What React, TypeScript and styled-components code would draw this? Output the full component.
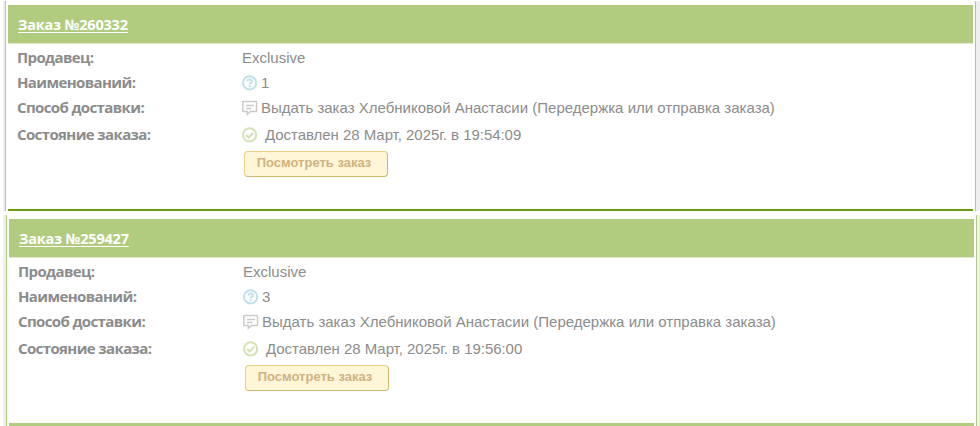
import { FC, ReactNode } from 'react';
import styled, { createGlobalStyle } from 'styled-components';

const green = '#b1cc7f';
const gray = '#efefef';

const GlobalStyle = createGlobalStyle`
    body {
        margin: 0;
        background: #fff;
        font-family: 'Liberation Sans', Arial, sans-serif;
        overflow: hidden;
    }
`;

const Page = styled.main`
    width: 980px;
    height: 426px;
    box-sizing: border-box;
    padding: 1px 0 0 3px;
    display: flex;
    flex-direction: column;
    gap: 4px;
    overflow: hidden;
`;

const StyledOrder = styled.article<{ $inner: number; $height: number }>`
    flex: none;
    height: ${({ $height }) => $height}px;
    box-sizing: border-box;
    display: flex;
    background: ${gray};
    padding-left: ${({ $inner }) => $inner}px;
`;

const Panel = styled.div`
    width: 965px;
    height: 100%;
    box-sizing: content-box;
    display: flex;
    flex-direction: column;
    background: #fff;
    border: solid ${green};
    border-width: 0 1px;
    padding: 0 2px;
`;

const Header = styled.header`
    height: 36px;
    margin-top: 4px;
    padding: 2px 10px 0;
    display: flex;
    align-items: center;
    background: ${green};
    border-bottom: 1px solid #dfe9cb;
`;

const OrderLink = styled.a`
    color: #fff;
    font: 700 14.5px/20px 'Open Sans', 'Noto Sans', sans-serif;
    letter-spacing: -0.2px;
    text-decoration: underline;
    text-underline-offset: 2px;
    text-decoration-thickness: 1px;
`;

const Details = styled.dl`
    margin: 1px 0 0;
    padding-left: 9px;
`;

const Row = styled.div<{ $height?: number }>`
    height: ${({ $height }) => $height ?? 25}px;
    display: grid;
    grid-template-columns: 225px 1fr;
    align-items: center;
`;

const Label = styled.dt`
    padding-bottom: 2px;
    color: #8c8c8c;
    font: 700 15px/20px 'Open Sans', 'Noto Sans', sans-serif;
    letter-spacing: -0.62px;
    white-space: nowrap;
`;

const Value = styled.dd<{ $gap?: number }>`
    margin: 0;
    display: flex;
    align-items: center;
    gap: ${({ $gap }) => $gap ?? 3}px;
    color: #8c8c8c;
    font-size: 15px;
    line-height: 20px;
    white-space: nowrap;
    svg {
        flex: none;
        display: block;
    }
`;

const Status = styled.span`
    letter-spacing: -0.04px;
`;

const ViewButton = styled.button`
    width: 144px;
    height: 26px;
    margin: 2px 0 0 236px;
    padding: 0 4px 3px 0;
    border: 1px solid;
    border-color: #ead184 #cbb86f #cbb86f #ead184;
    border-radius: 4px;
    background: #fff6d8;
    color: #d1b281;
    font: 700 13px/18px 'Liberation Sans', Arial, sans-serif;
`;

const BottomLine = styled.div<{ $color: string; $size: number }>`
    height: ${({ $size }) => $size}px;
    margin-top: auto;
    background: ${({ $color }) => $color};
`;

const QuestionIcon = () => (
    <svg width="16" height="16" viewBox="0 0 16 16" fill="none" stroke="#c0e2e9">
        <circle cx="7.6" cy="7.9" r="6.6" strokeWidth="2" />
        <path d="M5.4 6.4C5.4 3.8 9.9 3.8 9.9 6.2C9.9 7.8 7.7 7.8 7.7 9.3" strokeWidth="2.1" />
        <path d="M7.7 10.2v2" strokeWidth="2.1" />
    </svg>
);

const CommentIcon = () => (
    <svg width="16" height="16" viewBox="0 0 16 16" fill="none" stroke="#cbcbcb">
        <path
            d="M1.4 1.5h12.5q.6 0 .6.6v8.8q0 .6-.6.6H8.5L5.3 14.3V11.5H1.4q-.6 0-.6-.6V2.1q0-.6.6-.6z"
            strokeWidth="1.5"
        />
        <path d="M4 5.5h8M4 8.5h5.5" strokeWidth="1.3" />
    </svg>
);

const CheckIcon = () => (
    <svg width="16" height="16" viewBox="0 0 16 16" fill="none" stroke="#d5e2b6">
        <circle cx="7.6" cy="7.9" r="6.6" strokeWidth="2" />
        <path d="M4.1 7.9l2.5 2.6 4.5-4.8" strokeWidth="2.2" />
    </svg>
);

interface IField {
    label: string;
    height?: number;
    gap?: number;
    children: ReactNode;
}

const Field: FC<IField> = ({ label, height, gap, children }) => (
    <Row $height={height}>
        <Label>{label}</Label>
        <Value $gap={gap}>{children}</Value>
    </Row>
);

interface IOrder {
    id: number;
    seller: string;
    count: number;
    delivery: string;
    status: string;
    inner: number;
    height: number;
    lineSize: number;
    lineColor: string;
}

const orders: IOrder[] = [
    {
        id: 260332,
        seller: 'Exclusive',
        count: 1,
        delivery: 'Выдать заказ Хлебниковой Анастасии (Передержка или отправка заказа)',
        status: 'Доставлен 28 Март, 2025г. в 19:54:09',
        inner: 2,
        height: 210,
        lineSize: 2,
        lineColor: '#679b0b',
    },
    {
        id: 259427,
        seller: 'Exclusive',
        count: 3,
        delivery: 'Выдать заказ Хлебниковой Анастасии (Передержка или отправка заказа)',
        status: 'Доставлен 28 Март, 2025г. в 19:56:00',
        inner: 3,
        height: 211,
        lineSize: 3,
        lineColor: green,
    },
];

const Order: FC<IOrder> = ({
    id,
    seller,
    count,
    delivery,
    status,
    inner,
    height,
    lineSize,
    lineColor,
}) => (
    <StyledOrder $inner={inner} $height={height}>
        <Panel>
            <Header>
                <OrderLink>Заказ №{id}</OrderLink>
            </Header>
            <Details>
                <Field label="Продавец:">{seller}</Field>
                <Field label="Наименований:">
                    <QuestionIcon />
                    {count}
                </Field>
                <Field label="Способ доставки:">
                    <CommentIcon />
                    {delivery}
                </Field>
                <Field label="Состояние заказа:" height={29} gap={7}>
                    <CheckIcon />
                    <Status>{status}</Status>
                </Field>
            </Details>
            <ViewButton>Посмотреть заказ</ViewButton>
            <BottomLine $color={lineColor} $size={lineSize} />
        </Panel>
    </StyledOrder>
);

const App = () => (
    <>
        <GlobalStyle />
        <Page>
            {orders.map((order) => (
                <Order key={order.id} {...order} />
            ))}
        </Page>
    </>
);

export default App;
